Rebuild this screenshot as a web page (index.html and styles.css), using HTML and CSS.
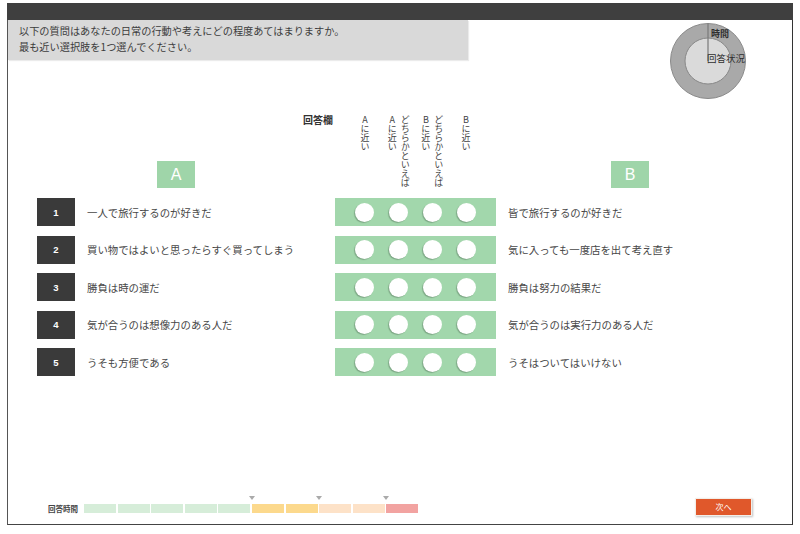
FILE: index.html
```html
<!DOCTYPE html>
<html lang="ja">
<head>
<meta charset="utf-8">
<link rel="stylesheet" href="styles.css">
</head>
<body>
<div class="window">
  <div class="titlebar"></div>
  <div class="top">
    <div class="instructions">
      <p>以下の質問はあなたの日常の行動や考えにどの程度あてはまりますか。</p>
      <p>最も近い選択肢を1つ選んでください。</p>
    </div>
    <div class="pie">
      <svg width="78" height="78" viewBox="0 0 78 78">
        <circle cx="39" cy="39" r="37.5" fill="#a9a9a9" stroke="#8a8a8a" stroke-width="1"/>
        <circle cx="39" cy="39" r="23" fill="#dadada" stroke="#888" stroke-width="1"/>
        <line x1="39" y1="1.5" x2="39" y2="39" stroke="#7a7a7a" stroke-width="1.2"/>
      </svg>
      <span class="pie-label time">時間</span>
      <span class="pie-label status">回答状況</span>
    </div>
  </div>

  <div class="table">
    <div class="row head">
      <div class="num-spacer"></div>
      <div class="left-head">
        <span class="answer-title">回答欄</span>
        <span class="side-box box-a">A</span>
      </div>
      <div class="labels">
        <div class="vcol"><span class="vtext">Aに近い</span></div>
        <div class="vcol"><span class="vtext">どちらかといえば<br>Aに近い</span></div>
        <div class="vcol"><span class="vtext">どちらかといえば<br>Bに近い</span></div>
        <div class="vcol"><span class="vtext">Bに近い</span></div>
      </div>
      <div class="right-head">
        <span class="side-box box-b">B</span>
      </div>
    </div>

    <div class="row q">
      <div class="num">1</div>
      <div class="text-a">一人で旅行するのが好きだ</div>
      <div class="bar"><span class="dot"></span><span class="dot"></span><span class="dot"></span><span class="dot"></span></div>
      <div class="text-b">皆で旅行するのが好きだ</div>
    </div>
    <div class="row q">
      <div class="num">2</div>
      <div class="text-a">買い物ではよいと思ったらすぐ買ってしまう</div>
      <div class="bar"><span class="dot"></span><span class="dot"></span><span class="dot"></span><span class="dot"></span></div>
      <div class="text-b">気に入っても一度店を出て考え直す</div>
    </div>
    <div class="row q">
      <div class="num">3</div>
      <div class="text-a">勝負は時の運だ</div>
      <div class="bar"><span class="dot"></span><span class="dot"></span><span class="dot"></span><span class="dot"></span></div>
      <div class="text-b">勝負は努力の結果だ</div>
    </div>
    <div class="row q">
      <div class="num">4</div>
      <div class="text-a">気が合うのは想像力のある人だ</div>
      <div class="bar"><span class="dot"></span><span class="dot"></span><span class="dot"></span><span class="dot"></span></div>
      <div class="text-b">気が合うのは実行力のある人だ</div>
    </div>
    <div class="row q">
      <div class="num">5</div>
      <div class="text-a">うそも方便である</div>
      <div class="bar"><span class="dot"></span><span class="dot"></span><span class="dot"></span><span class="dot"></span></div>
      <div class="text-b">うそはついてはいけない</div>
    </div>
  </div>

  <div class="footer">
    <div class="timer">
      <span class="timer-label">回答時間</span>
      <div class="segments">
        <span class="seg g"></span><span class="seg g"></span><span class="seg g"></span><span class="seg g"></span><span class="seg g mark"></span>
        <span class="seg y"></span><span class="seg y mark"></span>
        <span class="seg p"></span><span class="seg p mark"></span>
        <span class="seg r"></span>
      </div>
    </div>
    <button class="next">次へ</button>
  </div>
</div>
</body>
</html>
```

FILE: styles.css
```css
* { box-sizing: border-box; }
html, body { margin: 0; padding: 0; background: #fff; }
body {
  font-family: "Noto Sans CJK JP", "Noto Sans", sans-serif;
  color: #444;
  width: 800px;
  height: 534px;
  overflow: hidden;
}
p { margin: 0; }

.window {
  margin: 3px 0 0 7px;
  width: 786px;
  height: 522px;
  border-left: 1px solid #555;
  border-right: 1px solid #333;
  border-bottom: 1px solid #444;
  display: flex;
  flex-direction: column;
}
.titlebar {
  height: 17px;
  background: #3f3f3f;
  margin: 0 -1px;
}

.top {
  display: flex;
  justify-content: space-between;
  align-items: flex-start;
  height: 79px;
}
.instructions {
  width: 460px;
  height: 40px;
  background: #d9d9d9;
  padding: 3px 0 0 11px;
  font-size: 10.2px;
  line-height: 16px;
  color: #3c3c3c;
  box-shadow: 1px 1px 1px rgba(0,0,0,0.08);
}
.pie {
  position: relative;
  width: 78px;
  height: 78px;
  margin: 2px 45px 0 0;
}
.pie svg { display: block; }
.pie-label {
  position: absolute;
  font-size: 9px;
  line-height: 10px;
  color: #2e2e2e;
  white-space: nowrap;
}
.pie-label.time { left: 42px; top: 7px; font-weight: bold; }
.pie-label.status { left: 38px; top: 31px; font-size: 9.5px; }

.table {
  margin: 14px 0 0 29px;
  display: flex;
  flex-direction: column;
  gap: 9.5px;
}
.row {
  display: flex;
  align-items: center;
}
.row.head {
  align-items: stretch;
  height: 75px;
  margin-bottom: 0.5px;
}
.num-spacer { width: 38px; }
.left-head {
  width: 260px;
  display: flex;
  flex-direction: column;
  justify-content: space-between;
  align-items: flex-start;
}
.answer-title {
  align-self: flex-end;
  margin-right: 2px;
  margin-top: 1px;
  font-size: 10px;
  font-weight: bold;
  color: #333;
  line-height: 12px;
}
.side-box {
  width: 38px;
  height: 27px;
  background: #9fd5a9;
  color: #fff;
  font-family: "Liberation Sans", sans-serif;
  font-size: 16px;
  display: flex;
  align-items: center;
  justify-content: center;
}
.box-a { margin-left: 82px; }
.right-head {
  display: flex;
  align-items: flex-end;
  padding-left: 115px;
}
.labels {
  width: 161px;
  display: flex;
  justify-content: center;
  align-items: flex-start;
  padding-top: 2px;
}
.vcol {
  width: 33.7px;
  display: flex;
  justify-content: center;
}
.vtext {
  writing-mode: vertical-rl;
  text-orientation: upright;
  font-size: 9px;
  line-height: 13px;
  color: #444;
}

.num {
  width: 38px;
  height: 28px;
  background: #3a3a3a;
  color: #fff;
  font-family: "Liberation Sans", sans-serif;
  font-weight: bold;
  font-size: 9.5px;
  display: flex;
  align-items: center;
  justify-content: center;
}
.text-a {
  width: 260px;
  padding-left: 12px;
  font-size: 10.4px;
  color: #474747;
}
.bar {
  width: 161px;
  height: 28px;
  background: #a2d7ac;
  display: flex;
  align-items: center;
  justify-content: center;
  gap: 14.7px;
}
.dot {
  width: 19px;
  height: 19px;
  border-radius: 50%;
  background: #fff;
  box-shadow: -1px 1px 1px rgba(0,0,0,0.22);
}
.text-b {
  padding-left: 12px;
  font-size: 10.4px;
  color: #474747;
}

.footer {
  margin-top: auto;
  display: flex;
  justify-content: space-between;
  align-items: flex-end;
  padding: 0 41px 9px 40px;
}
.timer {
  display: flex;
  align-items: center;
  margin-bottom: 1px;
}
.timer-label {
  font-size: 7.5px;
  color: #444;
  width: 36px;
  font-weight: bold;
}
.segments {
  display: flex;
  gap: 1.6px;
}
.seg {
  width: 32px;
  height: 9px;
  position: relative;
}
.seg.g { background: #d6edd9; }
.seg.y { background: #fcd98d; }
.seg.p { background: #fde2c8; }
.seg.r { background: #f2a3a1; }
.seg.mark::after {
  content: "";
  position: absolute;
  right: -4.5px;
  top: -8px;
  border-left: 3px solid transparent;
  border-right: 3px solid transparent;
  border-top: 4px solid #aaa;
}
.next {
  width: 55px;
  height: 16px;
  border: none;
  padding: 0;
  background: #e0582b;
  color: #fff;
  font-family: "Noto Sans CJK JP", sans-serif;
  font-size: 8px;
  line-height: 16px;
  box-shadow: 0 0 0 1px #f3eee8, 1px 1px 2px 1px rgba(0,0,0,0.25);
}
```
